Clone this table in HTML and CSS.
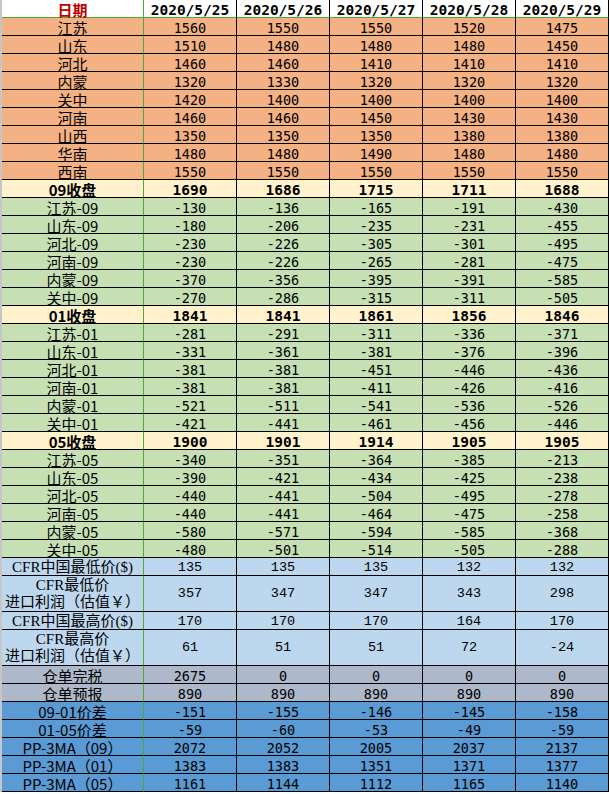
FILE: index.html
```html
<!DOCTYPE html>
<html lang="zh-CN">
<head>
<meta charset="utf-8">
<title>PP 价格表</title>
<link rel="stylesheet" href="styles.css">
</head>
<body>
<table class="sheet">
  <colgroup>
    <col class="c-lab"><col class="c-num"><col class="c-num"><col class="c-num"><col class="c-num"><col class="c-num">
  </colgroup>
  <tr class="r-hdr"><td class="lab date-lab">日期</td><td class="num">2020/5/25</td><td class="num">2020/5/26</td><td class="num">2020/5/27</td><td class="num">2020/5/28</td><td class="num">2020/5/29</td></tr>
  <tr class="r-or"><td class="lab">江苏</td><td class="num">1560</td><td class="num">1550</td><td class="num">1550</td><td class="num">1520</td><td class="num">1475</td></tr>
  <tr class="r-or"><td class="lab">山东</td><td class="num">1510</td><td class="num">1480</td><td class="num">1480</td><td class="num">1480</td><td class="num">1450</td></tr>
  <tr class="r-or"><td class="lab">河北</td><td class="num">1460</td><td class="num">1460</td><td class="num">1410</td><td class="num">1410</td><td class="num">1410</td></tr>
  <tr class="r-or"><td class="lab">内蒙</td><td class="num">1320</td><td class="num">1330</td><td class="num">1320</td><td class="num">1320</td><td class="num">1320</td></tr>
  <tr class="r-or"><td class="lab">关中</td><td class="num">1420</td><td class="num">1400</td><td class="num">1400</td><td class="num">1400</td><td class="num">1400</td></tr>
  <tr class="r-or"><td class="lab">河南</td><td class="num">1460</td><td class="num">1460</td><td class="num">1450</td><td class="num">1430</td><td class="num">1430</td></tr>
  <tr class="r-or"><td class="lab">山西</td><td class="num">1350</td><td class="num">1350</td><td class="num">1350</td><td class="num">1380</td><td class="num">1380</td></tr>
  <tr class="r-or"><td class="lab">华南</td><td class="num">1480</td><td class="num">1480</td><td class="num">1490</td><td class="num">1480</td><td class="num">1480</td></tr>
  <tr class="r-or"><td class="lab">西南</td><td class="num">1550</td><td class="num">1550</td><td class="num">1550</td><td class="num">1550</td><td class="num">1550</td></tr>
  <tr class="r-close"><td class="lab">09收盘</td><td class="num">1690</td><td class="num">1686</td><td class="num">1715</td><td class="num">1711</td><td class="num">1688</td></tr>
  <tr class="r-gr"><td class="lab">江苏-09</td><td class="num">-130</td><td class="num">-136</td><td class="num">-165</td><td class="num">-191</td><td class="num">-430</td></tr>
  <tr class="r-gr"><td class="lab">山东-09</td><td class="num">-180</td><td class="num">-206</td><td class="num">-235</td><td class="num">-231</td><td class="num">-455</td></tr>
  <tr class="r-gr"><td class="lab">河北-09</td><td class="num">-230</td><td class="num">-226</td><td class="num">-305</td><td class="num">-301</td><td class="num">-495</td></tr>
  <tr class="r-gr"><td class="lab">河南-09</td><td class="num">-230</td><td class="num">-226</td><td class="num">-265</td><td class="num">-281</td><td class="num">-475</td></tr>
  <tr class="r-gr"><td class="lab">内蒙-09</td><td class="num">-370</td><td class="num">-356</td><td class="num">-395</td><td class="num">-391</td><td class="num">-585</td></tr>
  <tr class="r-gr"><td class="lab">关中-09</td><td class="num">-270</td><td class="num">-286</td><td class="num">-315</td><td class="num">-311</td><td class="num">-505</td></tr>
  <tr class="r-close"><td class="lab">01收盘</td><td class="num">1841</td><td class="num">1841</td><td class="num">1861</td><td class="num">1856</td><td class="num">1846</td></tr>
  <tr class="r-gr"><td class="lab">江苏-01</td><td class="num">-281</td><td class="num">-291</td><td class="num">-311</td><td class="num">-336</td><td class="num">-371</td></tr>
  <tr class="r-gr"><td class="lab">山东-01</td><td class="num">-331</td><td class="num">-361</td><td class="num">-381</td><td class="num">-376</td><td class="num">-396</td></tr>
  <tr class="r-gr"><td class="lab">河北-01</td><td class="num">-381</td><td class="num">-381</td><td class="num">-451</td><td class="num">-446</td><td class="num">-436</td></tr>
  <tr class="r-gr"><td class="lab">河南-01</td><td class="num">-381</td><td class="num">-381</td><td class="num">-411</td><td class="num">-426</td><td class="num">-416</td></tr>
  <tr class="r-gr"><td class="lab">内蒙-01</td><td class="num">-521</td><td class="num">-511</td><td class="num">-541</td><td class="num">-536</td><td class="num">-526</td></tr>
  <tr class="r-gr"><td class="lab">关中-01</td><td class="num">-421</td><td class="num">-441</td><td class="num">-461</td><td class="num">-456</td><td class="num">-446</td></tr>
  <tr class="r-close"><td class="lab">05收盘</td><td class="num">1900</td><td class="num">1901</td><td class="num">1914</td><td class="num">1905</td><td class="num">1905</td></tr>
  <tr class="r-gr"><td class="lab">江苏-05</td><td class="num">-340</td><td class="num">-351</td><td class="num">-364</td><td class="num">-385</td><td class="num">-213</td></tr>
  <tr class="r-gr"><td class="lab">山东-05</td><td class="num">-390</td><td class="num">-421</td><td class="num">-434</td><td class="num">-425</td><td class="num">-238</td></tr>
  <tr class="r-gr"><td class="lab">河北-05</td><td class="num">-440</td><td class="num">-441</td><td class="num">-504</td><td class="num">-495</td><td class="num">-278</td></tr>
  <tr class="r-gr"><td class="lab">河南-05</td><td class="num">-440</td><td class="num">-441</td><td class="num">-464</td><td class="num">-475</td><td class="num">-258</td></tr>
  <tr class="r-gr"><td class="lab">内蒙-05</td><td class="num">-580</td><td class="num">-571</td><td class="num">-594</td><td class="num">-585</td><td class="num">-368</td></tr>
  <tr class="r-gr"><td class="lab">关中-05</td><td class="num">-480</td><td class="num">-501</td><td class="num">-514</td><td class="num">-505</td><td class="num">-288</td></tr>
  <tr class="r-lb"><td class="lab">CFR中国最低价($)</td><td class="num">135</td><td class="num">135</td><td class="num">135</td><td class="num">132</td><td class="num">132</td></tr>
  <tr class="r-lb r-dbl"><td class="lab">CFR最低价<br>进口利润（估值￥）</td><td class="num">357</td><td class="num">347</td><td class="num">347</td><td class="num">343</td><td class="num">298</td></tr>
  <tr class="r-lb"><td class="lab">CFR中国最高价($)</td><td class="num">170</td><td class="num">170</td><td class="num">170</td><td class="num">164</td><td class="num">170</td></tr>
  <tr class="r-lb r-dbl"><td class="lab">CFR最高价<br>进口利润（估值￥）</td><td class="num">61</td><td class="num">51</td><td class="num">51</td><td class="num">72</td><td class="num">-24</td></tr>
  <tr class="r-gy"><td class="lab">仓单完税</td><td class="num">2675</td><td class="num">0</td><td class="num">0</td><td class="num">0</td><td class="num">0</td></tr>
  <tr class="r-gy"><td class="lab">仓单预报</td><td class="num">890</td><td class="num">890</td><td class="num">890</td><td class="num">890</td><td class="num">890</td></tr>
  <tr class="r-bl"><td class="lab">09-01价差</td><td class="num">-151</td><td class="num">-155</td><td class="num">-146</td><td class="num">-145</td><td class="num">-158</td></tr>
  <tr class="r-bl"><td class="lab">01-05价差</td><td class="num">-59</td><td class="num">-60</td><td class="num">-53</td><td class="num">-49</td><td class="num">-59</td></tr>
  <tr class="r-bl"><td class="lab">PP-3MA（09）</td><td class="num">2072</td><td class="num">2052</td><td class="num">2005</td><td class="num">2037</td><td class="num">2137</td></tr>
  <tr class="r-bl"><td class="lab">PP-3MA（01）</td><td class="num">1383</td><td class="num">1383</td><td class="num">1351</td><td class="num">1371</td><td class="num">1377</td></tr>
  <tr class="r-bl"><td class="lab">PP-3MA（05）</td><td class="num">1161</td><td class="num">1144</td><td class="num">1112</td><td class="num">1165</td><td class="num">1140</td></tr>
</table>
</body>
</html>
```
FILE: styles.css
```css
html, body {
  margin: 0;
  padding: 0;
  background: #ffffff;
}

.sheet {
  border-collapse: separate;
  border-spacing: 0;
  table-layout: fixed;
  width: 609px;
  border-left: 2px solid #c6c6c6;
  color: #000000;
}

.c-lab { width: 142px; }
.c-num { width: 93px; }

.sheet td {
  box-sizing: border-box;
  height: 18px;
  padding: 0;
  border-right: 1px solid #000000;
  border-bottom: 1px solid #000000;
  text-align: center;
  vertical-align: middle;
  white-space: nowrap;
}

.sheet td.lab {
  border-right-color: #4fa83a;
  font-family: "Noto Sans CJK SC", sans-serif;
  font-size: 15px;
  line-height: 15px;
  padding-top: 1px;
}

.sheet td.num {
  font-family: "DejaVu Sans Mono", monospace;
  font-size: 13.5px;
  line-height: 14px;
  padding-top: 2px;
}

/* header */
.r-hdr td { background: #ffffff; border-bottom-color: #4fa83a; }
.r-hdr td.num { font-weight: bold; font-size: 14.5px; }
.r-hdr td.date-lab { color: #c00000; font-weight: bold; }

/* row fills */
.r-or td { background: #f4b183; }
.r-close td { background: #fff2cc; }
.r-close td.lab { font-weight: bold; }
.r-close td.num { font-weight: bold; font-size: 14.5px; }
.r-gr td { background: #c6e0b4; }
.r-lb td { background: #bdd7ee; }
.r-lb td.lab { font-family: "Liberation Serif", "Noto Sans CJK SC", serif; }
.r-lb td.num { font-family: "Liberation Mono", monospace; }
.r-gy td { background: #adb9ca; }
.r-bl td { background: #5b9bd5; }

.r-dbl td { height: 36px; }
.r-dbl td.lab { line-height: 17px; padding-top: 0; }
.r-dbl td.num { padding-top: 0; }
```
